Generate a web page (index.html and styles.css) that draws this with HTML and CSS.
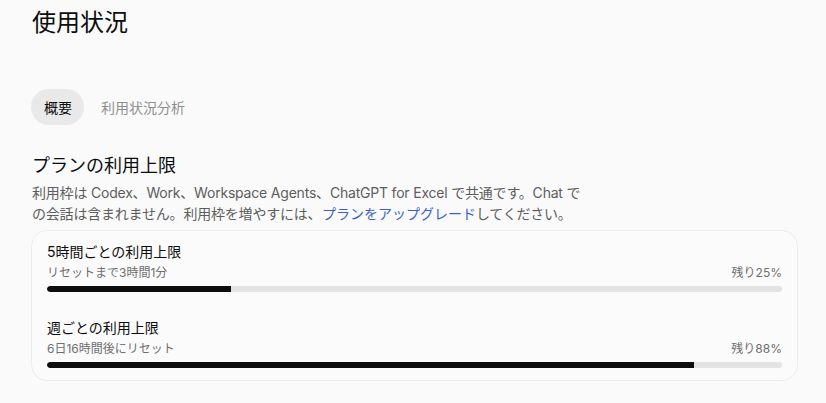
FILE: index.html
```html
<!DOCTYPE html>
<html lang="ja">
<head>
<meta charset="utf-8">
<link rel="stylesheet" href="styles.css">
</head>
<body>
<main class="page">
  <h1 class="title">使用状況</h1>
  <nav class="tabs">
    <span class="tab active">概要</span>
    <span class="tab">利用状況分析</span>
  </nav>
  <section class="limits">
    <h2 class="heading">プランの利用上限</h2>
    <p class="desc">利用枠は Codex、Work、Workspace Agents、ChatGPT for Excel で共通です。Chat での会話は含まれません。利用枠を増やすには、<a class="link">プランをアップグレード</a>してください。</p>
    <div class="card">
      <div class="row">
        <div class="row-title">5時間ごとの利用上限</div>
        <div class="row-meta"><span>リセットまで3時間1分</span><span>残り25%</span></div>
        <div class="bar"><div class="fill" style="width:25%"></div></div>
      </div>
      <div class="row">
        <div class="row-title">週ごとの利用上限</div>
        <div class="row-meta"><span>6日16時間後にリセット</span><span>残り88%</span></div>
        <div class="bar"><div class="fill" style="width:88%"></div></div>
      </div>
    </div>
  </section>
</main>
</body>
</html>
```
FILE: styles.css
```css
* { box-sizing: border-box; }
html, body { margin: 0; padding: 0; }
body {
  background: #fafafa;
  color: #0d0d0d;
  font-family: Inter, "Noto Sans CJK JP", sans-serif;
}
.page {
  padding: 8px 28px 0 31px;
}
.title {
  margin: 0 0 0 1px;
  font-size: 24px;
  font-weight: 400;
  line-height: 30px;
}
.tabs {
  display: flex;
  gap: 4px;
  margin-top: 51px;
}
.tab {
  height: 36px;
  display: flex;
  align-items: center;
  padding: 0 12px 0 13px;
  border-radius: 18px;
  font-size: 14px;
  color: #8f8f8f;
}
.tab.active {
  background: #e9e9e9;
  color: #0d0d0d;
}
.limits {
  margin-top: 28px;
}
.heading {
  margin: 0 0 0 1px;
  font-size: 18px;
  font-weight: 400;
  line-height: 26px;
}
.desc {
  margin: 4px 0 0 1px;
  max-width: 560px;
  font-size: 14px;
  line-height: 20.5px;
  letter-spacing: -0.2px;
  color: #5d5d5d;
}
.link {
  color: #3b5fcf;
  letter-spacing: 0;
  margin-left: 0.5px;
}
.card {
  margin-top: 6px;
  border: 1px solid #ececec;
  border-radius: 16px;
  background: #fbfbfb;
}
.row {
  padding: 11px 15px 12px 15px;
}
.row + .row { padding-top: 14px; }
.row-title {
  font-size: 14px;
  line-height: 20px;
  color: #0d0d0d;
}
.row-meta {
  display: flex;
  justify-content: space-between;
  margin-top: 2px;
  font-size: 12px;
  line-height: 18px;
  color: #6e6e6e;
}
.bar {
  margin-top: 4px;
  height: 6px;
  border-radius: 3px;
  background: #e3e3e3;
  overflow: hidden;
}
.fill {
  height: 100%;
  background: #0d0d0d;
  border-radius: 3px 0 0 3px;
}
```
